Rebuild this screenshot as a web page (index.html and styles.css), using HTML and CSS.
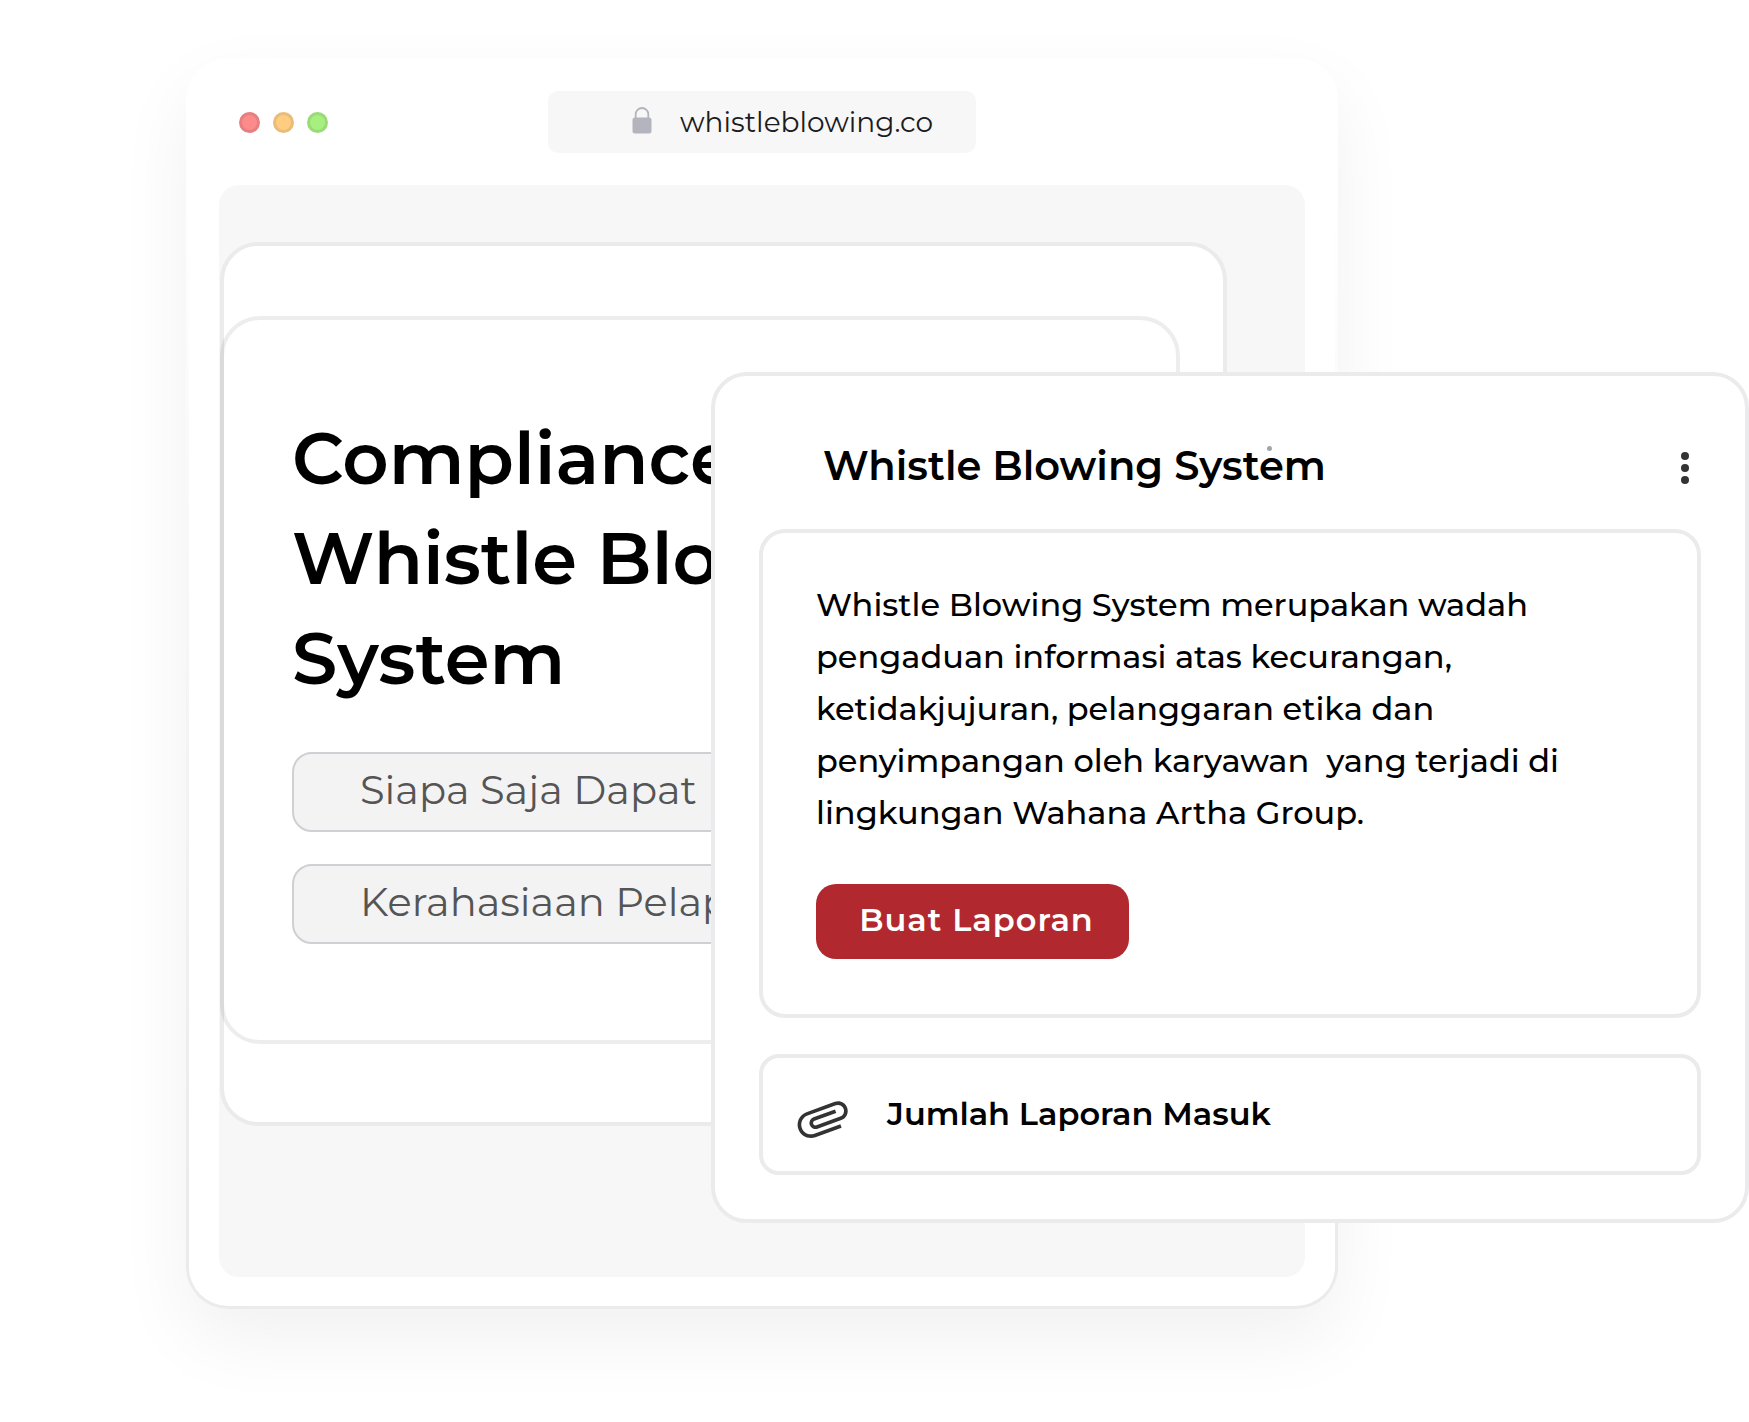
FILE: index.html
```html
<!doctype html>
<html lang="id">
    <head>
        <title>Whistle Blowing System</title>
        <meta charset="UTF-8">
        <meta name="viewport" content="width=device-width, initial-scale=1">
        <link rel="stylesheet" href="styles.css">
    </head>

    <body>
        <main class="stage">
            <!--Browser Start-->
            <section class="browser">
                <div class="toolbar">
                    <div class="lights">
                        <span class="light red"></span>
                        <span class="light yellow"></span>
                        <span class="light green"></span>
                    </div>
                    <div class="address">
                        <svg class="lock" viewBox="0 0 20 27" width="20" height="27" aria-hidden="true">
                            <path d="M3.700 12V7.300a6.300 6.300 0 0 1 12.600 0V12" fill="none" stroke="#b4b4be" stroke-width="1.800"/>
                            <rect x="0.500" y="10.500" width="19" height="16" rx="2.500" fill="#b4b4be"/>
                        </svg>
                        <span>whistleblowing.co</span>
                    </div>
                </div>
                <div class="screen">
                    <div class="sheet">
                        <div class="panel">
                            <h1>Compliance<br>Whistle Blowing<br>System</h1>
                            <button type="button" class="topic">Siapa Saja Dapat</button>
                            <button type="button" class="topic">Kerahasiaan Pelapor</button>
                        </div>
                    </div>
                </div>
            </section>
            <!--Browser End-->

            <!--Card Start-->
            <section class="card">
                <header class="card-head">
                    <h2>Whistle Blowing System<span class="speck"></span></h2>
                    <button type="button" class="more" aria-label="Menu">
                        <svg viewBox="0 0 8 32" width="8" height="32" fill="#333">
                            <circle cx="4" cy="4" r="4"/>
                            <circle cx="4" cy="16" r="4"/>
                            <circle cx="4" cy="28" r="4"/>
                        </svg>
                    </button>
                </header>
                <div class="box about">
                    <p>Whistle Blowing System merupakan wadah<br>
                    pengaduan informasi atas kecurangan,<br>
                    ketidakjujuran, pelanggaran etika dan<br>
                    penyimpangan oleh karyawan&nbsp; yang terjadi di<br>
                    lingkungan Wahana Artha Group.</p>
                    <button type="button" class="report">Buat Laporan</button>
                </div>
                <div class="box total">
                    <svg class="clip" viewBox="0 0 24 24" width="58" height="58" aria-hidden="true">
                        <path transform="rotate(70 12 12)" fill="#333" d="M16.500 6v11.500c0 2.210-1.790 4-4 4s-4-1.790-4-4V5a2.500 2.500 0 0 1 5 0v10.500c0 .55-.45 1-1 1s-1-.45-1-1V6H10v9.500a2.500 2.500 0 0 0 5 0V5c0-2.210-1.790-4-4-4S7 2.790 7 5v12.500c0 3.040 2.460 5.500 5.500 5.500s5.500-2.460 5.500-5.500V6h-1.500z"/>
                    </svg>
                    <h3>Jumlah Laporan Masuk</h3>
                </div>
            </section>
            <!--Card End-->
        </main>
    </body>
</html>
```

FILE: styles.css
```css
*{
    box-sizing: border-box;
}

body{
    margin: 0;
    font-family: Montserrat, Inter, "Liberation Sans", sans-serif;
    color: #000;
    background: #fff;
}

h1, h2, h3, p{
    margin: 0;
    font-weight: 600;
    white-space: nowrap;
}

button{
    font: inherit;
    cursor: pointer;
}

/* The card shares the third column with the browser and lies over it */
.stage{
    display: grid;
    grid-template-columns: 186px 525px minmax(0, 1fr) 411px;
    align-items: start;
    padding: 58px 0 112px;
    overflow: hidden;
}

/* Browser */
.browser{
    grid-column: 2 / 4;
    grid-row: 1;
    padding: 30px 30px 29px;
    border: 3px solid transparent;
    border-radius: 42px;
    background:
        linear-gradient(#fff, #fff) padding-box,
        linear-gradient(#fff 10%, #ebebeb 90%) border-box;
    box-shadow: 0 30px 75px rgba(0, 0, 0, 0.06);
}

.toolbar{
    display: grid;
    grid-template-columns: 1fr 428px 1fr;
    align-items: center;
    padding-left: 20px;
    padding-right: 20px;
    margin-bottom: 32px;
}

.lights{
    display: flex;
    gap: 13px;
}
.light{
    width: 21px;
    height: 21px;
    border: 3px solid;
    border-radius: 50%;
}
.light.red{
    background: #fc8b8b;
    border-color: #e77f80;
}
.light.yellow{
    background: #fecd7f;
    border-color: #eabc78;
}
.light.green{
    background: #a7ef7f;
    border-color: #99db75;
}

.address{
    display: flex;
    align-items: center;
    height: 62px;
    padding-left: 84px;
    gap: 28px;
    border-radius: 10px;
    background: #f7f7f7;
    color: #1c1c1e;
    font-size: 28px;
    line-height: 40px;
}
.lock{
    flex: none;
    margin-bottom: 4px;
}

.screen{
    padding: 57px 78px 151px 1px;
    border-radius: 20px;
    background: #f7f7f7;
}

.sheet{
    padding: 70px 43px 78px 0;
    border: 4px solid #ebebec;
    border-radius: 38px;
    background: #fff;
}

/* see-through border, so the two left edges add up */
.panel{
    margin-left: -4px;
    padding: 88px 68px 96px;
    border: 4px solid rgba(0, 0, 0, 0.07);
    border-radius: 40px;
}
.panel h1{
    margin-bottom: 44px;
    font-size: 72px;
    line-height: 100px;
}

.topic{
    display: block;
    width: 100%;
    height: 80px;
    padding: 0 66px 6px;
    border: 2px solid #cfcfd4;
    border-radius: 20px;
    background: #f3f3f3;
    color: #555;
    font-size: 40px;
    text-align: left;
    white-space: nowrap;
}
.topic + .topic{
    margin-top: 32px;
}

/* Card */
.card{
    grid-column: 3 / 5;
    grid-row: 1;
    margin-top: 314px;
    padding: 63px 44px 44px;
    border: 4px solid #ebebed;
    border-radius: 36px;
    background: #fff;
}

.card-head{
    display: flex;
    align-items: center;
    justify-content: space-between;
    height: 58px;
    margin-bottom: 32px;
    padding: 0 4px 0 64px;
}
.card-head h2{
    position: relative;
    padding-bottom: 4px;
    font-size: 40px;
    line-height: 56px;
}
.speck{
    position: absolute;
    top: 8px;
    right: 54px;
    width: 5px;
    height: 5px;
    border-radius: 50%;
    background: #a3a3ad;
}
.more{
    display: flex;
    padding: 8px;
    border: 0;
    background: none;
}

.box{
    border: 4px solid #ebebec;
    border-radius: 26px;
}

.about{
    padding: 46px 53px 55px;
}
.about p{
    margin-bottom: 45px;
    font-size: 32px;
    font-weight: 500;
    line-height: 52px;
}

.report{
    width: 313px;
    height: 75px;
    padding: 0 0 4px 8px;
    border: 0;
    border-radius: 20px;
    background: #b1292e;
    color: #fff;
    font-size: 32px;
    font-weight: 600;
    letter-spacing: 1px;
}

.total{
    display: flex;
    align-items: center;
    height: 121px;
    margin-top: 36px;
    padding: 0 0 2px 31px;
    gap: 35px;
    border-radius: 20px;
}
.total .clip{
    margin-top: 10px;
}
.total h3{
    font-size: 32px;
    line-height: 40px;
}
```
